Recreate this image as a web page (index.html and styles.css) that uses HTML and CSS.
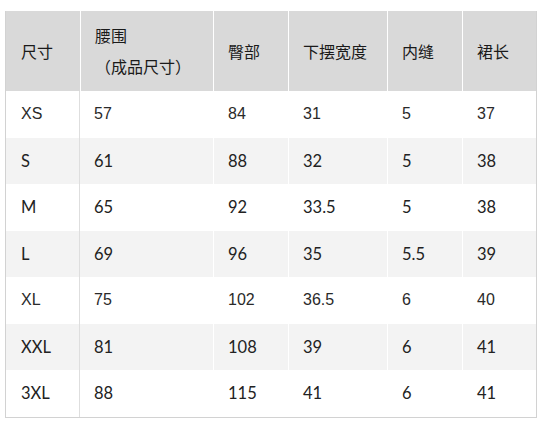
FILE: index.html
```html
<!DOCTYPE html>
<html lang="zh">
<head>
<meta charset="utf-8">
<link rel="stylesheet" href="styles.css">
</head>
<body>
<table class="size-table">
  <colgroup>
    <col class="c1"><col class="c2"><col class="c3"><col class="c4"><col class="c5"><col class="c6">
  </colgroup>
  <thead>
    <tr>
      <th>尺寸</th>
      <th>腰围<br>（成品尺寸）</th>
      <th>臀部</th>
      <th>下摆宽度</th>
      <th>内缝</th>
      <th>裙长</th>
    </tr>
  </thead>
  <tbody>
    <tr class="arial"><td>XS</td><td>57</td><td>84</td><td>31</td><td>5</td><td>37</td></tr>
    <tr class="alt"><td>S</td><td>61</td><td>88</td><td>32</td><td>5</td><td>38</td></tr>
    <tr><td>M</td><td>65</td><td>92</td><td>33.5</td><td>5</td><td>38</td></tr>
    <tr class="alt"><td>L</td><td>69</td><td>96</td><td>35</td><td>5.5</td><td>39</td></tr>
    <tr class="arial"><td>XL</td><td>75</td><td>102</td><td>36.5</td><td>6</td><td>40</td></tr>
    <tr class="alt"><td>XXL</td><td>81</td><td>108</td><td>39</td><td>6</td><td>41</td></tr>
    <tr><td>3XL</td><td>88</td><td>115</td><td>41</td><td>6</td><td>41</td></tr>
  </tbody>
</table>
</body>
</html>
```
FILE: styles.css
```css
html, body {
  margin: 0;
  padding: 0;
  background: #ffffff;
}
body {
  padding: 11px 0 0 5px;
  font-family: Lato, "Noto Sans CJK SC", sans-serif;
  color: #222222;
}
.size-table {
  border-collapse: separate;
  border-spacing: 0;
  table-layout: fixed;
  width: 532px;
  border: 1px solid #d2d2d2;
  border-top: none;
  font-size: 16.5px;
  font-weight: 400;
}
.c1 { width: 74px; }
.c2 { width: 133px; }
.c3 { width: 75px; }
.c4 { width: 99px; }
.c5 { width: 75px; }
.c6 { width: 74px; }
.size-table th,
.size-table td {
  text-align: left;
  vertical-align: middle;
  line-height: 30.5px;
  padding: 8px 0 8px 14px;
  border-left: 1px solid #ffffff;
  white-space: nowrap;
}
.size-table th {
  font-weight: 400;
  font-family: "Noto Sans CJK SC", sans-serif;
  font-size: 16px;
  color: #1a1a1a;
  background: #d9d9d9;
  padding-top: 9px;
  padding-bottom: 9px;
  height: 61px;
}
.size-table th:first-child,
.size-table td:first-child {
  border-left: none;
  padding-left: 15px;
}
.size-table td:first-child {
  border-right: 1px solid #dedede;
}
.size-table td:nth-child(2) {
  border-left: none;
}
.size-table th:nth-child(2) {
  line-height: 31px;
}
.size-table td {
  height: 30.5px;
}
.size-table tr.alt td {
  background: #f3f3f3;
}
.size-table tr.arial td {
  font-family: "Liberation Sans", Arial, sans-serif;
  font-size: 16px;
  font-weight: 400;
  color: #2a2a2a;
}
```
